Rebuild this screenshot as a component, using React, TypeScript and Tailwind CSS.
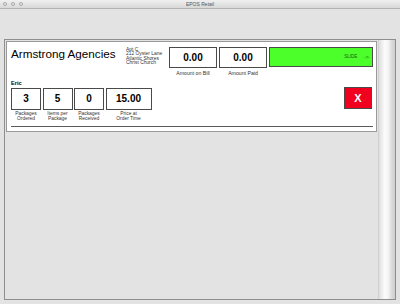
import React from "react";

const Field = ({ value, label, w }: { value: string; label: string[]; w: string }) => {
  return (
    <div className={`flex flex-col items-center ${w}`}>
      <div className={`h-[22px] ${w} border border-[#4a4a4a] bg-white flex items-center justify-center`}>
        <span className="text-[10px] font-bold text-black leading-none">{value}</span>
      </div>
      <div className="mt-[2px] text-[4.9px] leading-[4.5px] text-[#333] text-center whitespace-nowrap">
        {label.map((l) => (
          <div key={l}>{l}</div>
        ))}
      </div>
    </div>
  );
};

const Amount = ({ value, label }: { value: string; label: string }) => {
  return (
    <div className="flex flex-col items-center w-[48px] mt-[1px]">
      <div className="h-[21px] w-[48px] border border-[#4a4a4a] bg-white flex items-center justify-center">
        <span className="text-[10px] font-bold text-black leading-none">{value}</span>
      </div>
      <div className="mt-[2.5px] text-[5.2px] leading-[4px] text-[#333] whitespace-nowrap">{label}</div>
    </div>
  );
};

export default function App() {
  return (
    <div
      className="w-[400px] h-[304px] bg-[#e3e3e3] flex flex-col overflow-hidden"
      style={{ fontFamily: '"Liberation Sans", Arial, sans-serif' }}
    >
      {/* title bar */}
      <div className="h-[9px] relative flex items-center bg-[linear-gradient(to_bottom,#f0f0f0,#d8d8d8)] border-b border-[#b3b3b3]">
        <div className="flex gap-[4px] pl-[3px]">
          <div className="w-[4px] h-[4px] rounded-full border border-[#a8a8a8] bg-[#ececec]" />
          <div className="w-[4px] h-[4px] rounded-full border border-[#a8a8a8] bg-[#ececec]" />
          <div className="w-[4px] h-[4px] rounded-full border border-[#a8a8a8] bg-[#ececec]" />
        </div>
        <div className="flex-1 text-center text-[5px] leading-none text-[#555] pr-[23px]">EPOS Retail</div>
      </div>

      {/* pane */}
      <div className="mt-[30px] ml-[4px] w-[392px] h-[261px] border border-[#8e8e8e] flex">
        <div className="flex-1 pl-[1px] pt-[1px]">
          <div className="w-[371px] border border-[#9a9a9a] bg-white pl-[4px] pr-[2px] pt-[4px] pb-[4.5px]">
            {/* row 1 */}
            <div className="flex items-start">
              <div className="w-[115px] text-[11.7px] leading-[14px] text-black mt-[0.5px] whitespace-nowrap">
                Armstrong Agencies
              </div>
              <div className="w-[43px] mt-[1.5px] text-[4.9px] leading-[4.5px] text-[#333] whitespace-nowrap">
                <div>Apt C</div>
                <div>212 Oyster Lane</div>
                <div>Atlantic Shores</div>
                <div>Christ Church</div>
              </div>
              <div className="flex gap-[2px]">
                <Amount value="0.00" label="Amount on Bill" />
                <Amount value="0.00" label="Amount Paid" />
                <div className="mt-[1px] w-[104px] h-[20px] bg-[#4cff2a] border border-[#4a4a4a] flex items-center justify-end pr-[3px] gap-[7px]">
                  <span className="text-[4.6px] leading-none text-[#2a5a1a]">SLIDE</span>
                  <span className="text-[5px] leading-none text-[#2a5a1a]">-&gt;</span>
                </div>
              </div>
            </div>

            {/* row 2 */}
            <div className="flex justify-between items-start mt-[5.5px]">
              <div>
                <div className="text-[5.7px] leading-[6px] font-bold text-black">Eric</div>
                <div className="flex gap-[1.5px] mt-[2px]">
                  <Field value="3" label={["Packages", "Ordered"]} w="w-[30px]" />
                  <Field value="5" label={["Items per", "Package"]} w="w-[30px]" />
                  <Field value="0" label={["Packages", "Received"]} w="w-[30px]" />
                  <Field value="15.00" label={["Price at", "Order Time"]} w="w-[46px]" />
                </div>
              </div>
              <div className="mt-[7px] mr-[2px] w-[28px] h-[22px] bg-[#f20020] border border-[#4a4a4a] flex items-center justify-center">
                <span className="text-[11px] font-bold text-white leading-none">X</span>
              </div>
            </div>

            {/* divider */}
            <div className="mt-[4.5px] mr-[1px] h-[1px] bg-[#5a5a5a]" />
          </div>
        </div>
        {/* scrollbar */}
        <div className="w-[17px] h-full border-l border-[#d0d0d0] bg-[linear-gradient(to_right,#dedede,#fbfbfb_35%,#f6f6f6_55%,#dadada_80%,#cfcfcf)]" />
      </div>
    </div>
  );
}
